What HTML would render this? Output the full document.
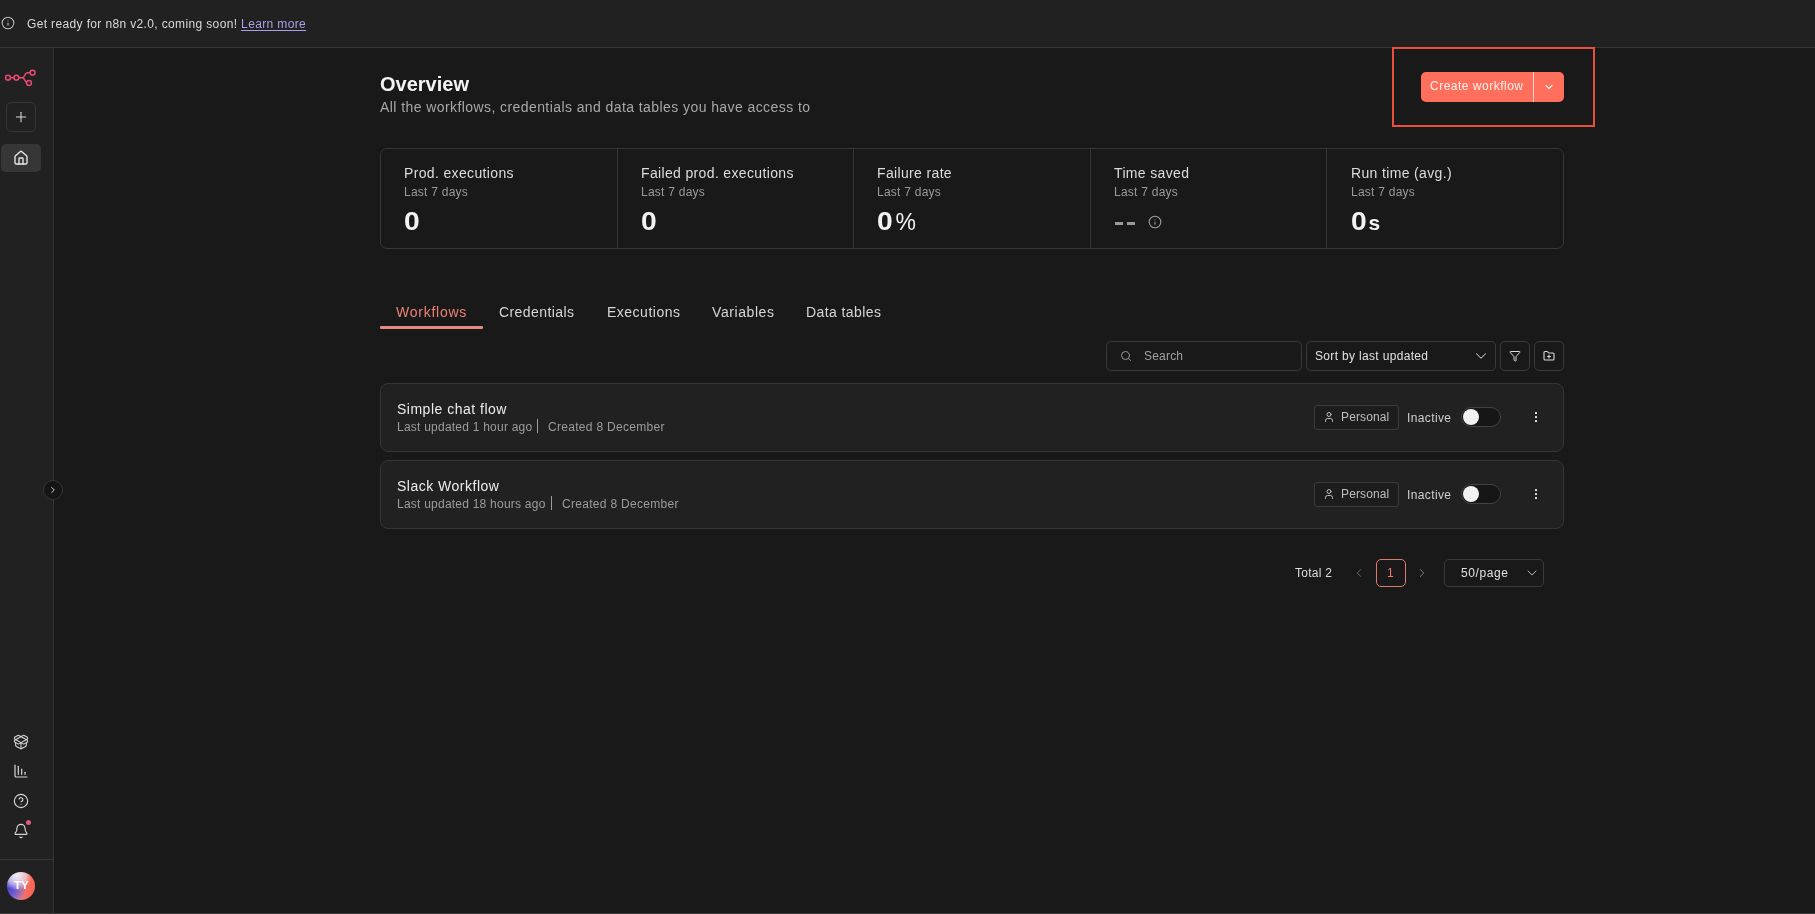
<!DOCTYPE html>
<html><head><meta charset="utf-8"><style>
*{box-sizing:border-box;margin:0;padding:0}
html,body{width:1815px;height:914px;overflow:hidden;background:#191919;font-family:"Liberation Sans",sans-serif;color:#e6e6e6}
.abs{position:absolute}
.t{position:absolute;white-space:nowrap;line-height:1;will-change:transform}
.card{position:absolute;border:1px solid #363636;border-radius:8px}
.sep{position:absolute;top:0;width:1px;height:100%;background:#363636}
.lbl{font-size:14px;color:#dcdcdc;letter-spacing:.35px}
.sub{font-size:12px;color:#9a9a9a;letter-spacing:.25px}
.val{font-size:25px;color:#f2f2f2;font-weight:bold}
.tab{font-size:14px;color:#d6d6d6;letter-spacing:.35px}
.z{display:inline-block;transform:scaleX(1.13);transform-origin:0 50%;margin-right:1.5px}
.box{position:absolute;border:1px solid #3a3a3a;border-radius:5px}
</style></head><body>
<div class="abs" style="left:0;top:0;width:1815px;height:48px;background:#212121;border-bottom:1px solid #363636"></div>
<svg class="abs" style="left:1px;top:16px" width="14" height="14" viewBox="0 0 24 24" fill="none" stroke="#bdbdbd" stroke-width="1.8" stroke-linecap="round" stroke-linejoin="round"><circle cx="12" cy="12" r="10"/><path d="M12 16v-4"/><path d="M12 8h.01"/></svg>
<div class="t" style="left:27px;top:18px;font-size:12px;color:#d9d9d9;letter-spacing:.36px">Get ready for n8n v2.0, coming soon! <span style="color:#a99ee8;text-decoration:underline;text-underline-offset:2px">Learn more</span></div>
<div class="abs" style="left:0;top:48px;width:54px;height:866px;background:#212121;border-right:1px solid #363636"></div>
<svg class="abs" style="left:4px;top:68px" width="34" height="20" viewBox="0 0 34 20"><g fill="none" stroke="#ea4b71" stroke-width="1.5"><circle cx="4" cy="9.7" r="2.4"/><circle cx="12.4" cy="9.7" r="2.4"/><circle cx="28.6" cy="4.7" r="2.4"/><circle cx="25" cy="15" r="2.4"/><path d="M6.4 9.7H10M14.8 9.7H18Q19.6 9.7 20.4 8L21.4 6.2Q22.2 4.7 23.8 4.7H26.2M18 9.7Q19.6 9.7 20.4 11.4L21.2 13Q21.6 13.8 22.7 14.3"/></g></svg>
<div class="box" style="left:6px;top:102px;width:30px;height:30px;border-color:#363636"></div>
<svg class="abs" style="left:13px;top:109px" width="16" height="16" viewBox="0 0 24 24" fill="none" stroke="#d8d8d8" stroke-width="1.6" stroke-linecap="round" stroke-linejoin="round"><path d="M5 12h14"/><path d="M12 5v14"/></svg>
<div class="abs" style="left:1px;top:144px;width:40px;height:28px;background:#363636;border-radius:5px"></div>
<svg class="abs" style="left:13px;top:150px" width="16" height="16" viewBox="0 0 24 24" fill="none" stroke="#eaeaea" stroke-width="2" stroke-linecap="round" stroke-linejoin="round"><path d="M15 21v-8a1 1 0 0 0-1-1h-4a1 1 0 0 0-1 1v8"/><path d="M3 10a2 2 0 0 1 .709-1.528l7-5.999a2 2 0 0 1 2.582 0l7 5.999A2 2 0 0 1 21 10v9a2 2 0 0 1-2 2H5a2 2 0 0 1-2-2z"/></svg>
<svg class="abs" style="left:13px;top:734px" width="16" height="16" viewBox="0 0 24 24" fill="none" stroke="#d6d6d6" stroke-width="1.6" stroke-linecap="round" stroke-linejoin="round"><path d="M12 22v-9"/><path d="M15.17 2.21a1.67 1.67 0 0 1 1.63 0L21 4.57a1.93 1.93 0 0 1 0 3.36L8.82 14.79a1.655 1.655 0 0 1-1.64 0L3 12.43a1.93 1.93 0 0 1 0-3.36z"/><path d="M20 13v3.87a2.06 2.06 0 0 1-1.11 1.83l-6 3.08a1.93 1.93 0 0 1-1.78 0l-6-3.08A2.06 2.06 0 0 1 4 16.87V13"/><path d="M21 12.43a1.93 1.93 0 0 0 0-3.36L8.83 2.2a1.64 1.64 0 0 0-1.63 0L3 4.57a1.93 1.93 0 0 0 0 3.36l12.18 6.86a1.636 1.636 0 0 0 1.63 0z"/></svg>
<svg class="abs" style="left:13px;top:763px" width="16" height="16" viewBox="0 0 24 24" fill="none" stroke="#d6d6d6" stroke-width="1.8" stroke-linecap="round" stroke-linejoin="round"><path d="M3 3v16a2 2 0 0 0 2 2h16"/><path d="M8 17V5"/><path d="M13 17V9"/><path d="M18 17v-3"/></svg>
<svg class="abs" style="left:13px;top:793px" width="16" height="16" viewBox="0 0 24 24" fill="none" stroke="#d6d6d6" stroke-width="1.7" stroke-linecap="round" stroke-linejoin="round"><circle cx="12" cy="12" r="10"/><path d="M9.09 9a3 3 0 0 1 5.83 1c0 2-3 3-3 3"/><path d="M12 17h.01"/></svg>
<svg class="abs" style="left:13px;top:823px" width="16" height="16" viewBox="0 0 24 24" fill="none" stroke="#d6d6d6" stroke-width="1.7" stroke-linecap="round" stroke-linejoin="round"><path d="M10.268 21a2 2 0 0 0 3.464 0"/><path d="M3.262 15.326A1 1 0 0 0 4 17h16a1 1 0 0 0 .74-1.673C19.41 13.956 18 12.499 18 8A6 6 0 0 0 6 8c0 4.499-1.411 5.956-2.738 7.326"/></svg>
<div class="abs" style="left:26px;top:820px;width:5px;height:5px;border-radius:3px;background:#e05a7a"></div>
<div class="abs" style="left:0;top:859px;width:53px;height:1px;background:#363636"></div>
<div class="abs" style="left:7px;top:872px;width:28px;height:28px;border-radius:14px;background:radial-gradient(circle at 35% 12%,#f2eef6 0,rgba(240,234,245,.6) 30%,rgba(240,234,245,0) 50%),radial-gradient(circle at 8% 58%,#4a3ed6 0,rgba(90,80,215,.7) 28%,rgba(77,64,208,0) 55%),linear-gradient(95deg,#a898e0 0%,#d88a9a 45%,#f76a5c 70%,#ff6450 100%)"></div>
<div class="t" style="left:14px;top:880px;font-size:11.5px;font-weight:bold;color:#fff">TY</div>
<div class="abs" style="left:43px;top:480px;width:20px;height:20px;border-radius:10px;background:#151515;border:1px solid #363636"></div>
<svg class="abs" style="left:48px;top:485px" width="10" height="10" viewBox="0 0 24 24" fill="none" stroke="#e0e0e0" stroke-width="2.2" stroke-linecap="round" stroke-linejoin="round"><path d="m9 18 6-6-6-6"/></svg>
<div class="t" style="left:380px;top:74px;font-size:20px;font-weight:bold;color:#f4f4f4">Overview</div>
<div class="t" style="left:380px;top:100px;font-size:14px;color:#a8a8a8;letter-spacing:.42px">All the workflows, credentials and data tables you have access to</div>
<div class="abs" style="left:1392px;top:47px;width:203px;height:80px;border:2px solid #e8503c"></div>
<div class="abs" style="left:1421px;top:72px;width:143px;height:30px;background:#ff6f5c;border-radius:5px"></div>
<div class="abs" style="left:1533px;top:72px;width:1px;height:30px;background:#ffd6cf"></div>
<div class="t" style="left:1430px;top:80px;font-size:12px;color:#fff3f0;letter-spacing:.5px">Create workflow</div>
<svg class="abs" style="left:1543px;top:81px" width="12" height="12" viewBox="0 0 24 24" fill="none" stroke="#fff3f0" stroke-width="2.4" stroke-linecap="round" stroke-linejoin="round"><path d="m6 9 6 6 6-6"/></svg>
<div class="card" style="left:380px;top:148px;width:1184px;height:101px;border-radius:7px"><div class="sep" style="left:235.5px"></div><div class="sep" style="left:472px"></div><div class="sep" style="left:708.5px"></div><div class="sep" style="left:945px"></div></div>
<div class="t lbl" style="left:404px;top:166px">Prod. executions</div><div class="t sub" style="left:404px;top:186px">Last 7 days</div>
<div class="t lbl" style="left:641px;top:166px">Failed prod. executions</div><div class="t sub" style="left:641px;top:186px">Last 7 days</div>
<div class="t lbl" style="left:877px;top:166px">Failure rate</div><div class="t sub" style="left:877px;top:186px">Last 7 days</div>
<div class="t lbl" style="left:1114px;top:166px">Time saved</div><div class="t sub" style="left:1114px;top:186px">Last 7 days</div>
<div class="t lbl" style="left:1351px;top:166px">Run time (avg.)</div><div class="t sub" style="left:1351px;top:186px">Last 7 days</div>
<div class="t val" style="left:404px;top:209px"><span class="z">0</span></div>
<div class="t val" style="left:641px;top:209px"><span class="z">0</span></div>
<div class="t val" style="left:877px;top:209px"><span class="z">0</span><span style="font-size:23px;margin-left:3px;font-weight:normal">%</span></div>
<div class="abs" style="left:1115px;top:222px;width:8px;height:3px;background:#9a9a9a"></div><div class="abs" style="left:1127px;top:222px;width:8px;height:3px;background:#9a9a9a"></div>
<svg class="abs" style="left:1148px;top:215px" width="14" height="14" viewBox="0 0 24 24" fill="none" stroke="#a0a0a0" stroke-width="1.8" stroke-linecap="round" stroke-linejoin="round"><circle cx="12" cy="12" r="10"/><path d="M12 16v-4"/><path d="M12 8h.01"/></svg>
<div class="t val" style="left:1351px;top:209px"><span class="z">0</span><span style="font-size:21px;margin-left:2px">s</span></div>
<div class="t tab" style="left:396px;top:305px;color:#ef8276;letter-spacing:.75px">Workflows</div>
<div class="abs" style="left:380px;top:326px;width:103px;height:3px;background:#e98a82;border-radius:1px"></div>
<div class="t tab" style="left:499px;top:305px;letter-spacing:0.42px">Credentials</div>
<div class="t tab" style="left:607px;top:305px;letter-spacing:0.5px">Executions</div>
<div class="t tab" style="left:712px;top:305px;letter-spacing:0.58px">Variables</div>
<div class="t tab" style="left:806px;top:305px;letter-spacing:0.42px">Data tables</div>
<div class="box" style="left:1106px;top:341px;width:196px;height:30px"></div>
<svg class="abs" style="left:1120px;top:350px" width="12" height="12" viewBox="0 0 24 24" fill="none" stroke="#9a9a9a" stroke-width="2" stroke-linecap="round" stroke-linejoin="round"><circle cx="11" cy="11" r="8"/><path d="m21 21-4.3-4.3"/></svg>
<div class="t" style="left:1144px;top:350px;font-size:12px;color:#a0a0a0;letter-spacing:.2px">Search</div>
<div class="box" style="left:1306px;top:341px;width:190px;height:30px"></div>
<div class="t" style="left:1315px;top:350px;font-size:12px;color:#e2e2e2;letter-spacing:.33px">Sort by last updated</div>
<svg class="abs" style="left:1472px;top:347px" width="18" height="18" viewBox="0 0 24 24" fill="none" stroke="#bdbdbd" stroke-width="1.4" stroke-linecap="round" stroke-linejoin="round"><path d="m6 9 6 6 6-6"/></svg>
<div class="box" style="left:1500px;top:341px;width:30px;height:30px"></div>
<svg class="abs" style="left:1509px;top:350px" width="12" height="12" viewBox="0 0 24 24" fill="none" stroke="#dadada" stroke-width="2" stroke-linecap="round" stroke-linejoin="round"><path d="M10 20a1 1 0 0 0 .553.895l2 1A1 1 0 0 0 14 21v-7a2 2 0 0 1 .517-1.341L21.74 4.67A1 1 0 0 0 21 3H3a1 1 0 0 0-.742 1.67l7.225 7.989A2 2 0 0 1 10 14z"/></svg>
<div class="box" style="left:1534px;top:341px;width:30px;height:30px"></div>
<svg class="abs" style="left:1543px;top:350px" width="12" height="12" viewBox="0 0 24 24" fill="none" stroke="#dadada" stroke-width="2.2" stroke-linecap="round" stroke-linejoin="round"><path d="M12 10v6"/><path d="M9 13h6"/><path d="M20 20a2 2 0 0 0 2-2V8a2 2 0 0 0-2-2h-7.9a2 2 0 0 1-1.69-.9L9.6 3.9A2 2 0 0 0 7.93 3H4a2 2 0 0 0-2 2v13a2 2 0 0 0 2 2Z"/></svg>
<div class="card" style="left:380px;top:383px;width:1184px;height:69px;background:#212121"></div>
<div class="t" style="left:397px;top:402px;font-size:14px;color:#ececec;letter-spacing:.5px">Simple chat flow</div>
<div class="t" style="left:397px;top:421px;font-size:12px;color:#9c9c9c;letter-spacing:.23px">Last updated 1 hour ago</div>
<div class="abs" style="left:537px;top:419px;width:1px;height:14px;background:#9c9c9c"></div>
<div class="t" style="left:548px;top:421px;font-size:12px;color:#9c9c9c;letter-spacing:.3px">Created 8 December</div>
<div class="box" style="left:1314px;top:405px;width:85px;height:25px;border-radius:3px;background:#1d1d1d"></div>
<svg class="abs" style="left:1323px;top:411px" width="12" height="12" viewBox="0 0 24 24" fill="none" stroke="#bdbdbd" stroke-width="2" stroke-linecap="round" stroke-linejoin="round"><path d="M19 21v-2a4 4 0 0 0-4-4H9a4 4 0 0 0-4 4v2"/><circle cx="12" cy="7" r="4"/></svg>
<div class="t" style="left:1341px;top:411px;font-size:12px;color:#bdbdbd;letter-spacing:.13px">Personal</div>
<div class="t" style="left:1407px;top:412px;font-size:12px;color:#cfcfcf;letter-spacing:.38px">Inactive</div>
<div class="abs" style="left:1461px;top:407px;width:40px;height:20px;border-radius:10px;background:#161616;border:1px solid #424242"></div>
<div class="abs" style="left:1463px;top:409px;width:16px;height:16px;border-radius:8px;background:#f2f2f2"></div>
<div class="abs" style="left:1534.8px;top:412px;width:2.4px;height:2.4px;border-radius:.6px;background:#ececec"></div>
<div class="abs" style="left:1534.8px;top:416px;width:2.4px;height:2.4px;border-radius:.6px;background:#ececec"></div>
<div class="abs" style="left:1534.8px;top:420px;width:2.4px;height:2.4px;border-radius:.6px;background:#ececec"></div>
<div class="card" style="left:380px;top:460px;width:1184px;height:69px;background:#212121"></div>
<div class="t" style="left:397px;top:479px;font-size:14px;color:#ececec;letter-spacing:.5px">Slack Workflow</div>
<div class="t" style="left:397px;top:498px;font-size:12px;color:#9c9c9c;letter-spacing:.23px">Last updated 18 hours ago</div>
<div class="abs" style="left:551px;top:496px;width:1px;height:14px;background:#9c9c9c"></div>
<div class="t" style="left:562px;top:498px;font-size:12px;color:#9c9c9c;letter-spacing:.3px">Created 8 December</div>
<div class="box" style="left:1314px;top:482px;width:85px;height:25px;border-radius:3px;background:#1d1d1d"></div>
<svg class="abs" style="left:1323px;top:488px" width="12" height="12" viewBox="0 0 24 24" fill="none" stroke="#bdbdbd" stroke-width="2" stroke-linecap="round" stroke-linejoin="round"><path d="M19 21v-2a4 4 0 0 0-4-4H9a4 4 0 0 0-4 4v2"/><circle cx="12" cy="7" r="4"/></svg>
<div class="t" style="left:1341px;top:488px;font-size:12px;color:#bdbdbd;letter-spacing:.13px">Personal</div>
<div class="t" style="left:1407px;top:489px;font-size:12px;color:#cfcfcf;letter-spacing:.38px">Inactive</div>
<div class="abs" style="left:1461px;top:484px;width:40px;height:20px;border-radius:10px;background:#161616;border:1px solid #424242"></div>
<div class="abs" style="left:1463px;top:486px;width:16px;height:16px;border-radius:8px;background:#f2f2f2"></div>
<div class="abs" style="left:1534.8px;top:489px;width:2.4px;height:2.4px;border-radius:.6px;background:#ececec"></div>
<div class="abs" style="left:1534.8px;top:493px;width:2.4px;height:2.4px;border-radius:.6px;background:#ececec"></div>
<div class="abs" style="left:1534.8px;top:497px;width:2.4px;height:2.4px;border-radius:.6px;background:#ececec"></div>
<div class="t" style="left:1295px;top:567px;font-size:12px;color:#dedede;letter-spacing:.28px">Total 2</div>
<svg class="abs" style="left:1352px;top:566px" width="14" height="14" viewBox="0 0 24 24" fill="none" stroke="#6a6a6a" stroke-width="1.6" stroke-linecap="round" stroke-linejoin="round"><path d="m15 18-6-6 6-6"/></svg>
<div class="abs" style="left:1376px;top:559px;width:30px;height:28px;border:1px solid #e07a6c;border-radius:5px"></div>
<div class="t" style="left:1387px;top:567px;font-size:12px;color:#f07a6a;letter-spacing:0">1</div>
<svg class="abs" style="left:1415px;top:566px" width="14" height="14" viewBox="0 0 24 24" fill="none" stroke="#8a8a8a" stroke-width="1.6" stroke-linecap="round" stroke-linejoin="round"><path d="m9 18 6-6-6-6"/></svg>
<div class="box" style="left:1444px;top:559px;width:100px;height:28px;border-radius:5px"></div>
<div class="t" style="left:1461px;top:567px;font-size:12px;color:#e2e2e2;letter-spacing:.6px">50/page</div>
<svg class="abs" style="left:1524px;top:565px" width="16" height="16" viewBox="0 0 24 24" fill="none" stroke="#bdbdbd" stroke-width="1.4" stroke-linecap="round" stroke-linejoin="round"><path d="m6 9 6 6 6-6"/></svg>
<div class="abs" style="left:0;top:913px;width:1815px;height:1px;background:#3a3a3a"></div>
</body></html>
